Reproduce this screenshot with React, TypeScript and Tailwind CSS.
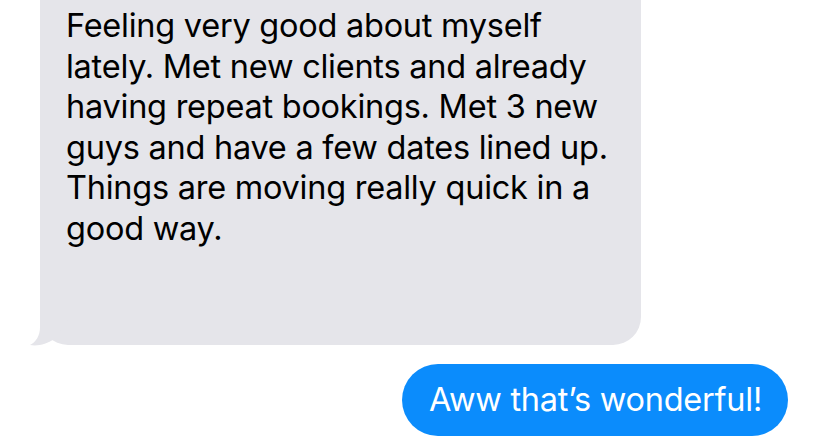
import React from "react";

export default function App() {
  const font = { fontFamily: "Inter, 'Noto Sans', sans-serif" };
  return (
    <div className="w-[828px] h-[437px] overflow-hidden bg-white flex flex-col" style={font}>
      <div className="relative ml-[40px] w-[601px] h-[345px] shrink-0">
        <div className="h-full w-full bg-[#e5e5ea] rounded-b-[28px] pl-[26px] pr-[10px] pt-[6px]">
          <p className="text-[32.5px] leading-[40.5px] text-black tracking-[-0.25px] whitespace-nowrap">
            Feeling very good about myself
            <br />
            lately. Met new clients and already
            <br />
            having repeat bookings. Met 3 new
            <br />
            guys and have a few dates lined up.
            <br />
            Things are moving really quick in a
            <br />
            good way.
          </p>
        </div>
        <svg
          className="absolute left-[-12px] top-[300px]"
          width="60"
          height="50"
          viewBox="0 0 60 50"
        >
          <path
            d="M12 0 L12 27 C12 36 8 42 2 45 C10 46.5 19 44 26 39 L40 20 L40 0 Z"
            fill="#e5e5ea"
          />
        </svg>
      </div>
      <div className="mt-[19px] ml-auto mr-[40px] h-[72px] rounded-full bg-[#0b8cfc] pl-[27px] pr-[26px] flex items-center shrink-0">
        <span className="text-[32.5px] leading-none text-white tracking-[-0.25px] whitespace-nowrap">
          Aww that’s wonderful!
        </span>
      </div>
    </div>
  );
}
